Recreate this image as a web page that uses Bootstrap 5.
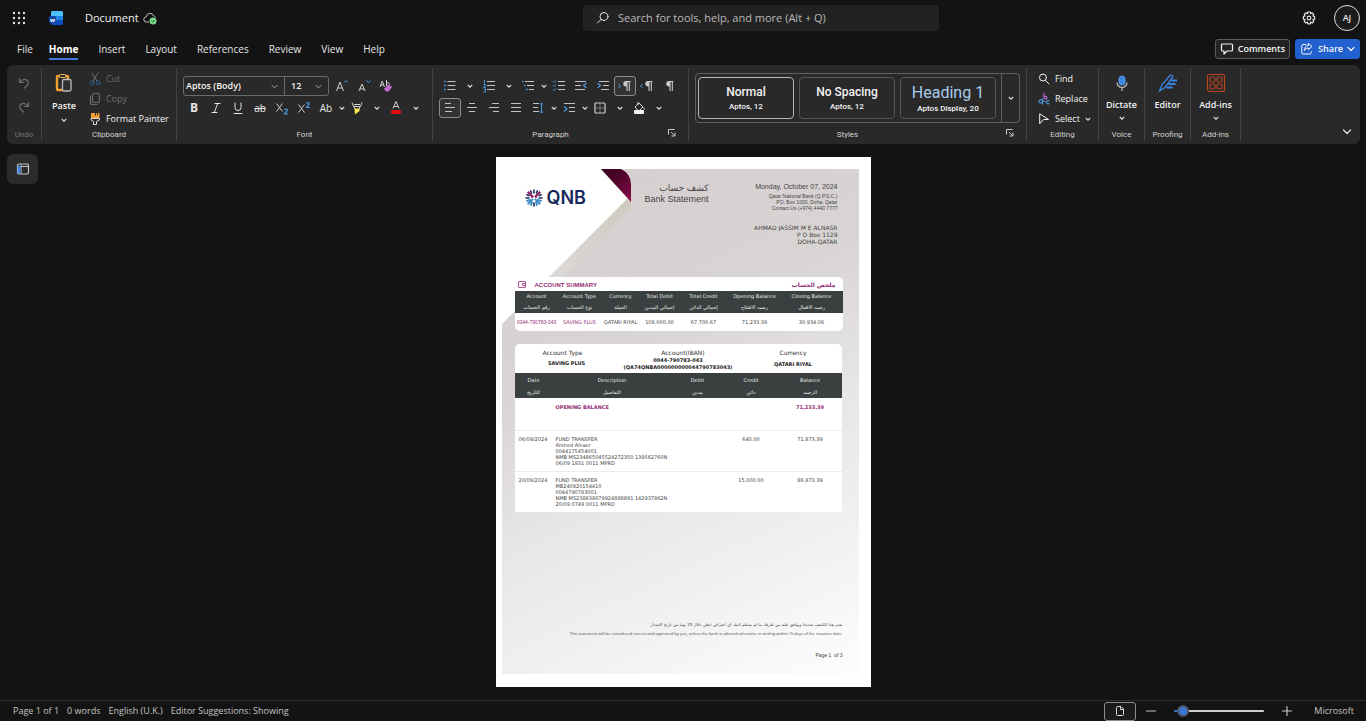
<!DOCTYPE html>
<html lang="en" data-bs-theme="dark">
<head>
<meta charset="utf-8">
<meta name="viewport" content="width=device-width, initial-scale=1">
<title>Document</title>
<link href="https://cdn.jsdelivr.net/npm/bootstrap@5.3.0/dist/css/bootstrap.min.css" rel="stylesheet">
<style>
:root{--ui:"Open Sans","Noto Sans",sans-serif;--line:#414141;--blue:#4a9be0}
body{background:#131313;color:#e6e6e6;font:10px/14px var(--ui)}
button,a.tab{color:inherit}
.ib,.chev,.rowbtn,.bigbtn,.plain{background:none;border:0;padding:0;color:inherit;font:inherit}
svg{display:block;flex:none}
.i16{width:16px;height:16px}.i14{width:14px;height:14px}.i20{width:20px;height:20px}.i8{width:8px;height:8px}
svg.st{fill:none;stroke:currentColor;stroke-width:1.2;stroke-linecap:round;stroke-linejoin:round}
svg.thin{stroke-width:1}

/* title bar */
.titlebar{display:grid;grid-template-columns:583fr 356fr 427fr;height:35px}
.launcher{margin-left:12px}
.word-logo{margin-left:22px}
.doc-name{font-size:11px;margin-left:21px;color:#f2f2f2}
.search{background:#222;border-radius:4px;height:26px;padding:0 13px}
.search input{background:none;border:0;color:#ddd;font-size:11px;outline:0;padding:0}
.search input::placeholder{color:#b9b9b9;opacity:1}
.account{gap:18px;padding-right:6px}
.avatar{width:26px;height:26px;border:1px solid #dcdcdc;border-radius:50%;font-size:9px;font-weight:600;background:#1c1c1c}

/* tabs */
.tabs{height:30px;padding:0 6px 0 17px}
.tablist{gap:20px}
.tab{text-decoration:none;color:#d6d6d6;line-height:18px;border-bottom:2px solid transparent}
.tab.current{color:#fff;font-weight:700;border-color:#3f78d8;margin-left:-4px}
.pills{gap:5px;padding-bottom:2px}
.pill{height:20px;border-radius:3px;font-size:9px;font-weight:600;padding:0 4px;border:1px solid #5b5b5b;background:#232323;color:#f4f4f4;line-height:16px;white-space:nowrap}
.pill.share{background:#2061cf;border-color:#2061cf}

/* ribbon */
.ribbon{background:#292929;border-radius:6px;margin:0 6px 0 7px;height:79px}
.group{border-right:1px solid var(--line);margin:3px 0;display:flex;flex-direction:column;justify-content:space-between;position:relative;flex:none;font-size:9px}
.g-undo{width:35px}.g-clip{width:135px}.g-font,.g-par{width:256px}.g-styles{width:338px}.g-edit{width:72px}.g-one{width:46px}.g-add{width:50px}
.glabel{font:8px/12px Roboto,sans-serif;text-align:center;color:#d2d2d2}
.glabel.dim{color:#777}
.glabel.with-launch{padding-right:20px}
.rows{padding:8px 6px 0}
.g-undo .rows{padding-top:5px}
.row-a{margin-bottom:2px;height:20px}
.ib{width:22px;height:20px;display:flex;align-items:center;justify-content:center;flex:none}
.ib.on{border:1px solid #8d8d8d;border-radius:3px;background:#333}
.chev{display:flex;align-items:center;justify-content:center;width:17px;height:20px;flex:none}
.chev.near{width:9px}
.stack{padding-top:1px}
.g-edit .stack{padding-left:10px}
.rowbtn{display:flex;align-items:center;gap:4px;height:20px;font-weight:500;color:#f4f4f4;white-space:nowrap}
.rowbtn:disabled,.ib:disabled{color:#6c6c6c}
.bigbtn{display:flex;flex-direction:column;align-items:center;gap:6px;padding-top:5px;font-weight:600;font-size:9px;line-height:12px;color:#f3f3f3}
.bigbtn .i8{margin-top:-3px}
.bigbtn.paste{gap:7px}
.clip-body{gap:12px;padding-left:10px}
.letter{font:400 10px/16px var(--ui)}
.letter.strong{font:700 12px/16px var(--ui)}
.pick{height:20px;border:1px solid #6a6a6a;background-color:#292929;border-radius:3px 0 0 3px;font:600 9px/16px var(--ui);padding:0 14px 0 2px;background-size:7px;background-position:right 6px center;color:#f4f4f4;width:102px}
.pick.size{width:45px;border-radius:0 3px 3px 0;margin:0 2px 0 -1px;padding-left:6px}
.launch{position:absolute;right:11px;bottom:3px}
.gallery{border:1px solid #606060;border-radius:4px;height:50px;margin:5px 6px 0;padding-left:2px;gap:5px}
.style-card{width:96px;height:42px;border:1px solid #555;border-radius:4px;background:none;color:#f3f3f3;padding:0;font:500 8px/11px Roboto,sans-serif;display:flex;flex-direction:column;align-items:center;justify-content:center;flex:none}
.style-card.chosen{border-color:#b5b5b5}
.style-card b{font:500 12px/17px Roboto,sans-serif}
.style-card b.h1name{font:400 16px/20px Roboto,sans-serif;color:#a9cdec}
.gallery .more{border-left:1px solid #606060;width:18px;margin-left:auto}

/* canvas */
.canvas{display:grid;grid-template-columns:1fr auto 1fr;padding:13px 7px}
.nav-btn{width:31px;height:30px;background:#2b2b2b;border-radius:6px;margin-top:-3px;display:flex;align-items:center;justify-content:center}
.sheet{width:375px;height:530px;background:#fff;padding:12px 12px 13px 6px;color:#444}
.paper{position:relative;height:505px;background:linear-gradient(155deg,#d4cfce 0%,#d8d4d3 34%,#e8e6e6 58%,#f1f0f0 76%,#fdfdfd 100%);font:5px/6px "DejaVu Sans",sans-serif;padding:0 16px 0 13px}
.paper-art{position:absolute;left:0;top:0}
.letterhead{position:relative;height:108px;display:grid;grid-template-columns:129px 65px 1fr}
.brand{padding:19px 0 0 10px;gap:4px}
.qnb{font:600 18px/20px Inter,sans-serif;color:#16285c}
.titles{padding-top:14px;font-size:9px;line-height:11px}
.sender{padding:13px 5px 0 0}
.issued{font-size:7px;line-height:9px;margin-bottom:2px}
.holder{font-size:6px;line-height:7px;margin-top:13px}
.arial{font-family:"Liberation Sans",sans-serif}
.purple{color:#962d74}
.panel{position:relative;background:#fff;border-radius:5px;overflow:hidden}
.panel.summary{height:54px}
.panel.detail{margin:13px 1px 0 0;border-radius:5px 5px 0 0}
.panel-title{height:14px;padding:1px 7px 0 3px;font-size:6px;gap:9px}
.stmt{width:100%;table-layout:fixed;border-collapse:collapse;line-height:6px}
.stmt th{background:#3a4040;color:#e8e8e8;font-weight:400;text-align:center;padding:0}
.stmt td{text-align:center;padding:0;vertical-align:top}
.sum th{height:22px;line-height:11px}
.sum td{height:18px;vertical-align:middle}
.c44{width:44px}.c42{width:42px}.c40{width:40px}.c38{width:38px}.c50{width:50px}.c52{width:52px}.c119{width:119px}.c55{width:55px}
.tx th{height:25px;line-height:12px}
.tx td{padding-top:5px;height:41px}
.tx tr.open td{padding-top:6px;height:32px;font-weight:700;color:#962d74}
.tx tbody tr+tr{border-top:1px solid #ececec}
.tx td:first-child{text-align:left;padding-left:4px;white-space:nowrap}
.tx td:nth-child(2){text-align:left;padding-left:3px;white-space:nowrap}
.acct{height:29px;display:grid;grid-template-columns:96px 140px 1fr;text-align:center;color:#222}
.acct dl{margin:0;padding-top:5px}
.acct dl:last-child{padding-right:6px}
.acct dt{font:400 6px/8px "DejaVu Sans",sans-serif;color:#333}
.acct dd{margin:0;font-weight:700;line-height:7px}
.acct dd.one{line-height:12px;padding-left:8px}
.acct dd.low{line-height:15px}
.acct dl.iban dt{padding-left:5px}
.acct dl.iban dd{margin:0 0 0 -5px}
.endnote{position:absolute;right:16px;bottom:16px;text-align:right;white-space:nowrap}
.endnote .ar{font-size:4px}
.endnote .en{font:4px/6px "Open Sans",sans-serif;margin:3px 0 15px}

/* status bar */
.status{border-top:1px solid #303030;height:21px;font-size:9px;color:#c4c4c4;padding:0 12px 0 13px}
.facts{gap:8px}
.view{width:32px;height:19px;border:1px solid #8c8c8c;border-radius:3px;background:#1b1b1b}
.zoomer{-webkit-appearance:none;appearance:none;background:none;width:90px;height:12px;margin:0}
.zoomer::-webkit-slider-runnable-track{height:2px;background:linear-gradient(90deg,#3a78d6 4px,#cfcfcf 4px);border-radius:1px}
.zoomer::-webkit-slider-thumb{-webkit-appearance:none;width:12px;height:12px;border-radius:50%;background:#3a78d6;border:2px solid #4b535f;margin-top:-5px}
</style>
</head>
<body class="d-flex flex-column min-vh-100">

<svg width="0" height="0" class="position-absolute" aria-hidden="true">
  <symbol id="chev" viewBox="0 0 8 8"><path d="M1.800 3l2.200 2.200L6.200 3" fill="none" stroke="#dcdcdc" stroke-width="1.100"/></symbol>
  <symbol id="launch" viewBox="0 0 10 10"><path d="M1.500 6.500v-5h6M4 4l3.500 3.500M8 4.500V8H4.500" fill="none" stroke="#ccc"/></symbol>
  <symbol id="clip" viewBox="0 0 20 20"><rect x="3" y="3" width="11" height="14" rx="1" fill="#292929" stroke="#f0a030" stroke-width="2.400"/><rect x="5.500" y="1.500" width="6" height="3" rx="1" fill="#292929" stroke="#f0b860"/><rect x="8.500" y="6.500" width="8.500" height="11.500" rx="1.500" fill="#303030" stroke="#bdbdbd" stroke-width="1.300"/></symbol>
  <symbol id="pilcrow" viewBox="0 0 14 14"><path d="M11.500 2.500H7M8 2.500V12M10.300 2.500V12" fill="none" stroke="#c8c8c8" stroke-width="1.100"/><path d="M7 2a2.700 2.700 0 0 0 0 5.500h1V2z" fill="#c8c8c8"/></symbol>
</svg>

<header>
  <div class="titlebar">
    <div class="d-flex align-items-center">
      <button class="plain launcher" aria-label="App launcher"><svg class="i14" viewBox="0 0 14 14" fill="#e4e4e4"><circle cx="2" cy="2" r="1.200"/><circle cx="7" cy="2" r="1.200"/><circle cx="12" cy="2" r="1.200"/><circle cx="2" cy="7" r="1.200"/><circle cx="7" cy="7" r="1.200"/><circle cx="12" cy="7" r="1.200"/><circle cx="2" cy="12" r="1.200"/><circle cx="7" cy="12" r="1.200"/><circle cx="12" cy="12" r="1.200"/></svg></button>
      <svg class="i16 word-logo" viewBox="0 0 16 16" aria-label="Word"><path d="M4.500 1h9A1.500 1.500 0 0 1 15 2.500V6H3V2.500A1.500 1.500 0 0 1 4.500 1z" fill="#4cc0f8"/><path d="M3 6h12v4.500H3z" fill="#1e86e6"/><path d="M3 10.500h12v3a1.500 1.500 0 0 1-1.500 1.500h-9A1.500 1.500 0 0 1 3 13.500z" fill="#0f4fc4"/><rect x="1" y="6" width="7" height="7" rx="1" fill="#1246a8"/><text x="4.500" y="11.500" font-family="Open Sans" font-size="6" font-weight="700" fill="#fff" text-anchor="middle">w</text></svg>
      <span class="doc-name">Document</span>
      <svg class="i14 ms-1" viewBox="0 0 14 14"><path d="M6 11H3.500a2.600 2.600 0 0 1-.2-5.200A3.800 3.800 0 0 1 10.700 5 2.600 2.600 0 0 1 12.700 6.500" fill="none" stroke="#c5c5c5"/><circle cx="10" cy="10" r="3.500" fill="#7ddc8c"/><path d="M8.400 10l1.200 1.200 2.100-2.200" fill="none" stroke="#174d22"/></svg>
    </div>
    <div class="d-flex align-items-center">
      <label class="search d-flex align-items-center gap-2 w-100">
        <svg class="i14 st thin" viewBox="0 0 14 14"><circle cx="8" cy="5.500" r="4"/><path d="M5 8.500L1.500 12"/></svg>
        <input class="w-100" type="search" aria-label="Search" placeholder="Search for tools, help, and more (Alt + Q)">
      </label>
    </div>
    <div class="account d-flex align-items-center justify-content-end">
      <button class="plain" aria-label="Settings"><svg class="i14 st" viewBox="0 0 14 14"><path d="M5.800 1h2.400l.4 1.700 1.500-.9 1.700 1.700-.9 1.500 1.700.5v2.700l-1.700.5.9 1.600-1.700 1.700-1.500-.9-.4 1.700H5.800l-.4-1.700-1.500.9-1.700-1.700.9-1.600-1.700-.5V5.500l1.700-.5-.9-1.500 1.700-1.700 1.500.9z"/><circle cx="7" cy="7" r="1.800"/></svg></button>
      <button class="avatar p-0" aria-label="Account">AJ</button>
    </div>
  </div>

  <nav class="tabs d-flex align-items-center justify-content-between">
    <div class="tablist d-flex">
      <a class="tab" href="#">File</a><a class="tab current" href="#">Home</a><a class="tab" href="#">Insert</a><a class="tab" href="#">Layout</a><a class="tab" href="#">References</a><a class="tab" href="#">Review</a><a class="tab" href="#">View</a><a class="tab" href="#">Help</a>
    </div>
    <div class="pills d-flex">
      <button class="pill d-flex align-items-center gap-1"><svg class="i14 st" viewBox="0 0 14 14"><path d="M2.500 2h9a1 1 0 0 1 1 1v5a1 1 0 0 1-1 1H7l-3 3V9H2.500a1 1 0 0 1-1-1V3a1 1 0 0 1 1-1z"/></svg>Comments</button>
      <button class="pill share d-flex align-items-center gap-1"><svg class="i14 st thin" viewBox="0 0 14 14"><path d="M6 2.500H3a1.200 1.200 0 0 0-1.200 1.200v7A1.200 1.200 0 0 0 3 12h7a1.200 1.200 0 0 0 1.200-1.200V9.500M8.500 1.500L12 4.500 8.500 7.500V6C6.500 6 5.200 6.800 4.500 8.500 4.500 5.500 6 3.500 8.500 3.200z"/></svg>Share<svg class="i8 st" viewBox="0 0 8 8"><path d="M1 2.500l3 3 3-3"/></svg></button>
    </div>
  </nav>

  <div class="ribbon d-flex">
    <section class="group g-undo">
      <div class="rows">
        <button class="ib" disabled aria-label="Undo"><svg class="i14 st" viewBox="0 0 14 14"><path d="M2.500 2.500v4h4M2.800 6.200C5 3.500 8 2.800 10 4.300c2 1.600 1.600 4-.2 5.500L7.500 12"/></svg></button>
        <button class="ib mt-1" disabled aria-label="Redo"><svg class="i14 st" viewBox="0 0 14 14"><path d="M11.500 2.500v4h-4M11.200 6.200C9 3.500 6 2.800 4 4.300c-2 1.600-1.600 4 .2 5.500L6.500 12"/></svg></button>
      </div>
      <div class="glabel dim">Undo</div>
    </section>

    <section class="group g-clip">
      <div class="clip-body d-flex">
        <button class="bigbtn paste"><svg class="i20"><use href="#clip"/></svg>Paste<svg class="i8"><use href="#chev"/></svg></button>
        <div class="stack">
          <button class="rowbtn" disabled><svg class="i14 st thin" viewBox="0 0 14 14"><path d="M4 1l5 8M10 1L5 9"/><g stroke="#2d5f8e"><circle cx="4" cy="10.800" r="1.900"/><circle cx="10" cy="10.800" r="1.900"/></g></svg>Cut</button>
          <button class="rowbtn" disabled><svg class="i14 st" viewBox="0 0 14 14"><rect x="4.500" y="1.500" width="7" height="9" rx="1.500"/><path d="M2.500 4v6.500a2 2 0 0 0 2 2H9"/></svg>Copy</button>
          <button class="rowbtn"><svg class="i14" viewBox="0 0 14 14"><path d="M3 1h8.500v6H3z" fill="#f0a030"/><path d="M7.500 1v2.500M9.500 1v2" stroke="#292929"/><path d="M3 6.500v1.500l2.500 1.500V12.500h3V9.500L11.500 8V6.500z" fill="#292929" stroke="#ddd"/></svg>Format Painter</button>
        </div>
      </div>
      <div class="glabel">Clipboard</div>
    </section>

    <section class="group g-font">
      <div class="rows">
        <div class="row-a d-flex">
          <select class="form-select pick" aria-label="Font"><option>Aptos (Body)</option></select>
          <select class="form-select pick size" aria-label="Font size"><option>12</option></select>
          <button class="ib" aria-label="Grow font"><svg class="i14" viewBox="0 0 14 14"><path d="M1.500 12L5 3l3.500 9M2.700 9h4.600" fill="none" stroke="#d0d0d0"/><path d="M9 3.500L11 1.500l2 2" fill="none" stroke="#4a9be0"/></svg></button>
          <button class="ib" aria-label="Shrink font"><svg class="i14" viewBox="0 0 14 14"><path d="M2 12l3-7 3 7M3 10h4" fill="none" stroke="#d0d0d0"/><path d="M9.500 1.500l2 2 2-2" fill="none" stroke="#4a9be0"/></svg></button>
          <button class="ib" aria-label="Clear formatting"><svg class="i14" viewBox="0 0 14 14"><path d="M1 8l2.200-6L5.500 8M1.800 6h2.800M7.500 1v6M7.500 4.500c1-1.500 3-.8 3 1" fill="none" stroke="#d0d0d0"/><path d="M5 10l4.500-4.500L13 8l-3.500 4.500H7z" fill="#c46fd0"/></svg></button>
        </div>
        <div class="d-flex">
          <button class="ib" aria-label="Bold"><span class="letter strong">B</span></button>
          <button class="ib" aria-label="Italic"><svg class="i14 st thin" viewBox="0 0 14 14"><path d="M6 2.500h5M3 11.500h5M8.700 2.500l-3.400 9"/></svg></button>
          <button class="ib" aria-label="Underline"><svg class="i14 st thin" viewBox="0 0 14 14"><path d="M4 2v4.500a3 3 0 0 0 6 0V2M3 12.500h8"/></svg></button>
          <button class="ib" aria-label="Strikethrough"><span class="letter text-decoration-line-through">ab</span></button>
          <button class="ib" aria-label="Subscript"><svg class="i14" viewBox="0 0 14 14"><path d="M1.500 2.500l6 8M7.500 2.500l-6 8" fill="none" stroke="#d0d0d0"/><path d="M9.500 9c.5-1.300 3-1.200 2.800.4C12.100 10.500 10 11.500 9.500 13H13" fill="none" stroke="#4a9be0" stroke-width="1.200"/></svg></button>
          <button class="ib" aria-label="Superscript"><svg class="i14" viewBox="0 0 14 14"><path d="M1.500 3.500l6 8M7.500 3.500l-6 8" fill="none" stroke="#d0d0d0"/><path d="M9.500 2.500c.5-1.300 3-1.200 2.800.4C12.100 4 10 5 9.500 6.500H13" fill="none" stroke="#4a9be0" stroke-width="1.200"/></svg></button>
          <button class="ib" aria-label="Change case"><span class="letter">Ab</span></button>
          <button class="chev near" aria-label="More case options"><svg class="i8"><use href="#chev"/></svg></button>
          <button class="ib" aria-label="Highlight"><svg class="i14" viewBox="0 0 14 14"><path d="M2 1.500l1.500 4h7l1.500-4M4 3.500h6M4 5.500l1 3h4l1-3" fill="none" stroke="#d0d0d0"/><path d="M4.500 7.500h5v2.500L5 13.500z" fill="#f4ec50"/></svg></button>
          <button class="chev" aria-label="Highlight colours"><svg class="i8"><use href="#chev"/></svg></button>
          <button class="ib" aria-label="Font colour"><svg class="i14" viewBox="0 0 14 14"><path d="M4 7.500L7 .5l3 7M5 5.500h4" fill="none" stroke="#d0d0d0"/><rect x="2" y="9" width="10" height="4" rx="1" fill="#e00b0b"/></svg></button>
          <button class="chev" aria-label="Font colours"><svg class="i8"><use href="#chev"/></svg></button>
        </div>
      </div>
      <div class="glabel">Font</div>
    </section>

    <section class="group g-par">
      <div class="rows">
        <div class="row-a d-flex">
          <button class="ib" aria-label="Bullets"><svg class="i14" viewBox="0 0 14 14"><path d="M4.500 2.500h8M4.500 6.500h8M4.500 10.500h8" stroke="#c4c4c4"/><path d="M1 2.500h1.800M1 6.500h1.800M1 10.500h1.800" stroke="#4a9be0" stroke-width="1.500"/></svg></button>
          <button class="chev" aria-label="Bullet styles"><svg class="i8"><use href="#chev"/></svg></button>
          <button class="ib" aria-label="Numbering"><svg class="i14" viewBox="0 0 14 14"><path d="M5 2.500h8M5 6.500h8M5 10.500h8" stroke="#c4c4c4"/><path d="M2.500 1v3.500M1.500 5.500h1.700v1.500L1.500 8.500h2M1.500 10h2v3h-2" stroke="#4a9be0" fill="none"/></svg></button>
          <button class="chev" aria-label="Number styles"><svg class="i8"><use href="#chev"/></svg></button>
          <button class="ib" aria-label="Multilevel list"><svg class="i14" viewBox="0 0 14 14"><path d="M4 2.500h9M6 6.500h7M8 10.500h5" stroke="#c4c4c4"/><path d="M1 2.500h1.600M3 6.500h1.600M5 10.500h1.600" stroke="#4a9be0" stroke-width="1.500"/></svg></button>
          <button class="chev near" aria-label="Multilevel styles"><svg class="i8"><use href="#chev"/></svg></button>
          <button class="ib" aria-label="Checklist"><svg class="i14" viewBox="0 0 14 14"><path d="M6 2.500h7M6 6.500h7M6 10.500h7" stroke="#c4c4c4"/><path d="M1 2.500l1 1 2-2M1 6.500l1 1 2-2M1 10.500l1 1 2-2" fill="none" stroke="#4a9be0"/></svg></button>
          <button class="ib" aria-label="Decrease indent"><svg class="i14" viewBox="0 0 14 14"><path d="M1 2.500h11M1 6.500h6M1 10.500h10" stroke="#c4c4c4"/><path d="M12.500 4L9.500 6.500l3 2.500" fill="none" stroke="#4a9be0" stroke-width="1.200"/></svg></button>
          <button class="ib" aria-label="Increase indent"><svg class="i14" viewBox="0 0 14 14"><path d="M3 2.500h10M7 6.500h6M5 10.500h8" stroke="#c4c4c4"/><path d="M1.500 4l3 2.500-3 2.500" fill="none" stroke="#4a9be0" stroke-width="1.200"/></svg></button>
          <button class="ib on" aria-label="Left to right"><svg width="16" height="14" viewBox="0 0 16 14"><use href="#pilcrow" x="2" width="14" height="14"/><path d="M1.500 5l2 2-2 2" fill="none" stroke="#4a9be0"/></svg></button>
          <button class="ib" aria-label="Right to left"><svg width="16" height="14" viewBox="0 0 16 14"><use href="#pilcrow" x="2" width="14" height="14"/><path d="M3.500 5l-2 2 2 2" fill="none" stroke="#4a9be0"/></svg></button>
          <button class="ib" aria-label="Show marks"><svg class="i14"><use href="#pilcrow"/></svg></button>
        </div>
        <div class="d-flex">
          <button class="ib on" aria-label="Align left"><svg class="i14" viewBox="0 0 14 14" stroke="#c4c4c4"><path d="M2 2.500h6M2 6.500h10M2 10.500h7"/></svg></button>
          <button class="ib" aria-label="Centre"><svg class="i14" viewBox="0 0 14 14" stroke="#c4c4c4"><path d="M4 2.500h6M2 6.500h10M4 10.500h6"/></svg></button>
          <button class="ib" aria-label="Align right"><svg class="i14" viewBox="0 0 14 14" stroke="#c4c4c4"><path d="M5 2.500h7M2 6.500h10M6 10.500h6"/></svg></button>
          <button class="ib" aria-label="Justify"><svg class="i14" viewBox="0 0 14 14" stroke="#c4c4c4"><path d="M2 2.500h10M2 6.500h10M2 10.500h10"/></svg></button>
          <button class="ib" aria-label="Line spacing"><svg class="i14" viewBox="0 0 14 14"><path d="M2 2.500h6M2 6.500h5M2 10.500h6" stroke="#c4c4c4"/><path d="M10.500 2v10M9 3.500l1.500-1.500L12 3.500M9 10.500l1.500 1.500 1.500-1.500" fill="none" stroke="#4a9be0"/></svg></button>
          <button class="chev near" aria-label="Spacing options"><svg class="i8"><use href="#chev"/></svg></button>
          <button class="ib" aria-label="Special indent"><svg class="i14" viewBox="0 0 14 14"><path d="M2 2.500h11M7 6.500h6M7 10.500h6" stroke="#c4c4c4"/><path d="M2 5.500l3 2.500-3 2.500" fill="none" stroke="#4a9be0" stroke-width="1.200"/></svg></button>
          <button class="chev near" aria-label="Indent options"><svg class="i8"><use href="#chev"/></svg></button>
          <button class="ib" aria-label="Borders"><svg class="i14" viewBox="0 0 14 14" fill="none"><rect x="2" y="2" width="10" height="10" rx="1" stroke="#d0d0d0" stroke-width="1.200"/><path d="M7 3v8M3 7h8" stroke="#777"/></svg></button>
          <button class="chev" aria-label="Border options"><svg class="i8"><use href="#chev"/></svg></button>
          <button class="ib" aria-label="Shading"><svg class="i14" viewBox="0 0 14 14"><path d="M3 6l4-4 4 4-3.500 3.500h-1.500zM6 1v3M11.500 6.500l1 2" fill="none" stroke="#d6d6d6"/><rect x="2" y="9" width="10" height="4" rx="1" fill="#f2f2f2"/></svg></button>
          <button class="chev" aria-label="Shading colours"><svg class="i8"><use href="#chev"/></svg></button>
        </div>
      </div>
      <div class="glabel with-launch">Paragraph</div>
      <button class="plain launch" aria-label="Paragraph settings"><svg width="10" height="10"><use href="#launch"/></svg></button>
    </section>

    <section class="group g-styles">
      <div class="gallery d-flex align-items-center">
        <button class="style-card chosen"><b>Normal</b>Aptos, 12</button>
        <button class="style-card"><b>No Spacing</b>Aptos, 12</button>
        <button class="style-card"><b class="h1name">Heading 1</b>Aptos Display, 20</button>
        <button class="chev more h-100" aria-label="More styles"><svg class="i8"><use href="#chev"/></svg></button>
      </div>
      <div class="glabel with-launch">Styles</div>
      <button class="plain launch" aria-label="Styles pane"><svg width="10" height="10"><use href="#launch"/></svg></button>
    </section>

    <section class="group g-edit">
      <div class="stack">
        <button class="rowbtn"><svg class="i14 st thin" viewBox="0 0 14 14"><circle cx="6" cy="5.500" r="3.500"/><path d="M8.500 8.500l3.500 3.500"/></svg>Find</button>
        <button class="rowbtn"><svg class="i14" viewBox="0 0 14 14" fill="none"><path d="M7 1v5.500M7 5c1-1.300 3-.6 3 .8S8 7.500 7 6.500" stroke="#b866c8" stroke-width="1.200"/><path d="M12.500 9c-1.300-.8-3-.2-3 1.300s1.700 2 3 1.200M5.500 12.500V6.500M5.500 8.500c-1.300-1.500-3.500-.8-3.500.8s2.200 2.300 3.500.8M5.500 9.500h3" stroke="#4a9be0" stroke-width="1.100"/></svg>Replace</button>
        <button class="rowbtn"><svg class="i14 st thin" viewBox="0 0 14 14"><path d="M3 2l8.500 5.500H6.500L3 11.500z"/></svg>Select<svg class="i8"><use href="#chev"/></svg></button>
      </div>
      <div class="glabel">Editing</div>
    </section>

    <section class="group g-one">
      <button class="bigbtn"><svg class="i20" viewBox="0 0 20 20" fill="none"><rect x="7" y="3" width="6" height="9" rx="3" fill="#3b86e0" stroke="#5a9cec"/><path d="M5 9.500a5 5 0 0 0 10 0M10 14.500V18" stroke="#c2c2c2" stroke-width="1.200"/></svg>Dictate<svg class="i8"><use href="#chev"/></svg></button>
      <div class="glabel">Voice</div>
    </section>
    <section class="group g-one">
      <button class="bigbtn"><svg class="i20" viewBox="0 0 20 20" fill="none"><path d="M1.500 18L4 11.500 12 2.500c1.200-1 3.500.8 2.500 2L7 14.500z" stroke="#3b86e0" stroke-width="1.300"/><path d="M13 7.500h6M10.500 11h7M8.500 14.500h6" stroke="#3b86e0" stroke-width="2.200"/></svg>Editor</button>
      <div class="glabel">Proofing</div>
    </section>
    <section class="group g-add">
      <button class="bigbtn"><svg class="i20" viewBox="0 0 20 20" fill="none" stroke="#b8451f" stroke-width="1.200"><rect x="1.500" y="1.500" width="17" height="17" rx="2"/><rect x="4" y="4" width="5" height="5" rx="1.500"/><rect x="11" y="4" width="5" height="5" rx="1.500"/><rect x="4" y="11" width="5" height="5" rx="1.500"/><rect x="11" y="11" width="5" height="5" rx="1.500"/></svg>Add-ins<svg class="i8"><use href="#chev"/></svg></button>
      <div class="glabel">Add-ins</div>
    </section>
    <button class="plain ms-auto align-self-end p-2" aria-label="Collapse ribbon"><svg width="10" height="9" viewBox="0 0 10 9" class="st"><path d="M1.500 3L5 6.500 8.500 3"/></svg></button>
  </div>
</header>

<main class="canvas flex-grow-1">
  <div><button class="plain nav-btn" aria-label="Navigation"><svg class="i14" viewBox="0 0 14 14" fill="none"><rect x="1.500" y="2" width="11" height="10" rx="1.500" stroke="#c4c4c4" stroke-width="1.200"/><path d="M5 4.500h7M5 2.500v9" stroke="#c4c4c4"/><rect x="1.500" y="4" width="3" height="7.500" fill="#3b86e0"/></svg></button></div>

  <article class="sheet">
    <div class="paper">
      <svg class="paper-art" width="357" height="160" viewBox="0 0 357 160" aria-hidden="true">
        <defs>
          <linearGradient id="maroon" x1="0" y1="0" x2="1" y2="1"><stop offset="0" stop-color="#3a0420"/><stop offset=".45" stop-color="#4e0429"/><stop offset="1" stop-color="#8c0c50"/></linearGradient>
          <linearGradient id="band" x1="1" y1="0" x2="0" y2="1"><stop offset="0" stop-color="#d0c8be"/><stop offset="1" stop-color="#dcdad9"/></linearGradient>
        </defs>
        <path d="M129 26v13L60 108H44z" fill="url(#band)"/>
        <path d="M0 0h99l28 28L0 155z" fill="#fff"/>
        <path d="M99 0h20q10 5 10 15v18z" fill="url(#maroon)"/>
      </svg>

      <div class="letterhead">
        <div class="brand d-flex align-items-center align-self-start">
          <svg width="18" height="18" viewBox="-10 -10 20 20">
            <g stroke="#16285c" stroke-width="1.800"><path d="M0-9.500V-5M0 9.500V5M-9.500 0H-5M9.500 0H5M-4-8.500L-2.500-5M8.500-4L5-2.500M4-8.500L2.500-5M-8.500-4L-5-2.500"/></g>
            <g stroke="#3d8fc4" stroke-width="2.200"><path d="M-7 7L-1 1M7 7L1 1M-3.500 8.500L-2 3.500M3.500 8.500L2 3.500M-8.500 3.500L-3.500 2M8.500 3.500L3.500 2"/></g>
            <g stroke="#8c1d5c" stroke-width="2.400"><path d="M-7-7L-1-1M7-7L1-1M-3.500-1.500H-1M3.500-1.500H1"/></g>
          </svg>
          <span class="qnb">QNB</span>
        </div>
        <div class="titles text-end"><div><span lang="ar" dir="rtl">كشف حساب</span></div><div class="arial text-nowrap">Bank Statement</div></div>
        <address class="sender text-end m-0">
          <div class="arial issued">Monday, October 07, 2024</div>
          <div class="arial">Qatar National Bank (Q.P.S.C.)<br>PO. Box 1000, Doha, Qatar<br>Contact Us (+974) 4440 7777</div>
          <div class="holder">AHMAD JASSIM M E ALNASR<br>P O Box 1129<br>DOHA-QATAR</div>
        </address>
      </div>

      <section class="panel summary">
        <div class="panel-title d-flex align-items-center purple fw-bold">
          <svg width="8" height="7" viewBox="0 0 8 7" fill="none" stroke="#962d74" stroke-width=".8"><rect x=".5" y=".5" width="7" height="6" rx=".5"/><path d="M7.500 2.500H4.500v2h3"/></svg>
          <span class="arial">ACCOUNT SUMMARY</span><span lang="ar" dir="rtl" class="ms-auto">ملخص الحساب</span>
        </div>
        <table class="stmt sum">
          <colgroup><col class="c44"><col class="c42"><col class="c40"><col class="c38"><col class="c50"><col class="c52"><col></colgroup>
          <thead><tr><th>Account<br>رقم الحساب</th><th>Account Type<br>نوع الحساب</th><th>Currency<br>العملة</th><th>Total Debit<br>إجمالي المدين</th><th>Total Credit<br>إجمالي الدائن</th><th>Opening Balance<br>رصيد الافتتاح</th><th>Closing Balance<br>رصيد الاقفال</th></tr></thead>
          <tbody><tr><td class="purple arial">0044-790783-043</td><td class="purple">SAVING PLUS</td><td>QATARI RIYAL</td><td>108,000.00</td><td>67,700.67</td><td>71,233.39</td><td>30,934.06</td></tr></tbody>
        </table>
      </section>

      <section class="panel detail">
        <div class="acct">
          <dl><dt>Account Type</dt><dd class="one">SAVING PLUS</dd></dl>
          <dl class="iban"><dt>Account(IBAN)</dt><dd>0044-790783-043<br>(QA74QNBA000000000044790783043)</dd></dl>
          <dl><dt>Currency</dt><dd class="low">QATARI RIYAL</dd></dl>
        </div>
        <table class="stmt tx">
          <colgroup><col class="c38"><col class="c119"><col class="c52"><col class="c55"><col></colgroup>
          <thead><tr><th>Date<br>التاريخ</th><th>Description<br>التفاصيل</th><th>Debit<br>مدين</th><th>Credit<br>دائن</th><th>Balance<br>الرصيد</th></tr></thead>
          <tbody>
            <tr class="open"><td></td><td>OPENING BALANCE</td><td></td><td></td><td>71,233.39</td></tr>
            <tr><td>06/09/2024</td><td>FUND TRANSFER<br>Ahmed Alnasr<br>0044175454001<br>NMB MS234865045524272350 139562760N<br>06/09 1831 0011 MPRD</td><td></td><td>640.00</td><td>71,873.39</td></tr>
            <tr><td>20/09/2024</td><td>FUND TRANSFER<br>MB240920154410<br>0044790783001<br>NMB MS238838679924888891 142937862N<br>20/09 0749 0011 MPRD</td><td></td><td>15,000.00</td><td>86,873.39</td></tr>
          </tbody>
        </table>
      </section>

      <footer class="endnote">
        <div lang="ar" dir="rtl" class="ar">يعتبر هذا الكشف صحيحا ويوافق عليه من طرفك ما لم يستلم البنك أي اعتراض خطي خلال 15 يوما من تاريخ الإصدار</div>
        <div class="en">This statement will be considered correct and approved by you, unless the bank is advised otherwise in writing within 15 days of the issuance date.</div>
        <div class="arial">Page 1&nbsp; of 3</div>
      </footer>
    </div>
  </article>
  <div></div>
</main>

<footer class="status d-flex align-items-center">
  <div class="facts d-flex flex-grow-1"><span>Page 1 of 1</span><span>0 words</span><span>English (U.K.)</span><span>Editor Suggestions: Showing</span></div>
  <button class="view p-0 d-flex align-items-center justify-content-center" aria-label="Page view"><svg width="10" height="12" viewBox="0 0 10 12" fill="none" stroke="#d6d6d6"><path d="M1.500 2.500a1 1 0 0 1 1-1H6l2.500 2.500V9.500a1 1 0 0 1-1 1h-5a1 1 0 0 1-1-1zM5.500 1.500V4.500h3"/></svg></button>
  <button class="plain ms-2" aria-label="Zoom out"><svg class="i14 st" viewBox="0 0 14 14"><path d="M2.500 7h9"/></svg></button>
  <input class="zoomer ms-3" type="range" min="0" max="100" value="3" aria-label="Zoom">
  <button class="plain ms-3" aria-label="Zoom in"><svg class="i14 st" viewBox="0 0 14 14"><path d="M2.500 7h9M7 2.500v9"/></svg></button>
  <span class="ms-3 ps-1">Microsoft</span>
</footer>

<script src="https://cdn.jsdelivr.net/npm/bootstrap@5.3.0/dist/js/bootstrap.bundle.min.js"></script>
</body>
</html>
